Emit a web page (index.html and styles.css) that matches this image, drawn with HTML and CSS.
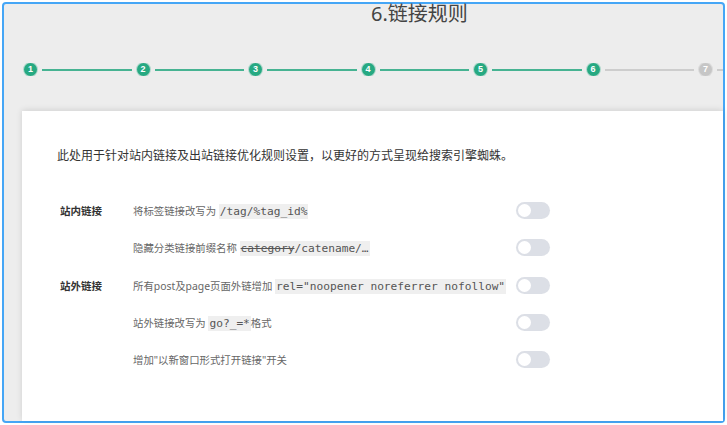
FILE: index.html
```html
<!DOCTYPE html>
<html lang="zh-CN">
<head>
  <meta charset="UTF-8" />
  <meta name="viewport" content="width=device-width, initial-scale=1.0"/>
  <title>链接规则</title>
  <link rel="stylesheet" href="styles.css">
</head>
<body>
  <div class="frame">
    <h1 class="title">6.链接规则</h1>

    <div class="steps">
      <span class="dot">1</span><span class="line"></span>
      <span class="dot">2</span><span class="line"></span>
      <span class="dot">3</span><span class="line"></span>
      <span class="dot">4</span><span class="line"></span>
      <span class="dot">5</span><span class="line"></span>
      <span class="dot">6</span><span class="line todo"></span>
      <span class="dot todo">7</span><span class="line todo"></span>
    </div>

    <div class="card">
      <p class="desc">此处用于针对站内链接及出站链接优化规则设置，以更好的方式呈现给搜索引擎蜘蛛。</p>

      <div class="rules">
        <div class="label">站内链接</div>
        <div class="text">将标签链接改写为 <code>/tag/%tag_id%</code></div>
        <span class="switch"></span>

        <div class="label"></div>
        <div class="text">隐藏分类链接前缀名称 <code><del>category</del>/catename/…</code></div>
        <span class="switch"></span>

        <div class="label">站外链接</div>
        <div class="text">所有post及page页面外链增加 <code>rel="noopener noreferrer nofollow"</code></div>
        <span class="switch"></span>

        <div class="label"></div>
        <div class="text">站外链接改写为 <code>go?_=*</code>格式</div>
        <span class="switch"></span>

        <div class="label"></div>
        <div class="text">增加"以新窗口形式打开链接"开关</div>
        <span class="switch"></span>
      </div>
    </div>
  </div>
</body>
</html>
```

FILE: styles.css
```css
body {
  margin: 0;
  background: #fff;
  font-family: "Noto Sans", "Noto Sans CJK SC", sans-serif;
}

.frame {
  display: flex;
  flex-direction: column;
  margin: 2px;
  height: 417px;
  border: 2px solid #45a6f6;
  border-radius: 4px;
  background: #ededed;
}

.title {
  margin: 0;
  padding-left: 367px;
  font-size: 20px;
  font-weight: normal;
  line-height: 20px;
  color: #444;
}

.steps {
  display: flex;
  align-items: center;
  margin-top: 39px;
  padding-left: 20px;
  overflow: hidden;
}

.dot {
  flex: none;
  width: 13px;
  height: 13px;
  border-radius: 50%;
  background: #26a982;
  box-shadow: 0 0 0 1px rgba(38, 169, 130, 0.3);
  color: #fff;
  font-family: "Liberation Sans", sans-serif;
  font-size: 9px;
  font-weight: bold;
  line-height: 13px;
  text-align: center;
}

.dot.todo {
  background: #c6c6c6;
  box-shadow: 0 0 0 1px rgba(180, 180, 180, 0.3);
}

.line {
  flex: none;
  width: 89.5px;
  height: 2px;
  margin: 0 5px;
  background: #46b392;
}

.line.todo {
  background: #cdcdcd;
}

.steps .line:last-child {
  flex: 1;
  width: auto;
  margin-right: 0;
}

.card {
  flex: 1;
  margin: 35px 0 0 18px;
  padding: 36px 0 0 35px;
  background: #fff;
  box-shadow: 0 -1px 6px rgba(0, 0, 0, 0.12);
}

.desc {
  margin: 0;
  font-size: 12px;
  line-height: 18px;
  color: #333;
}

.rules {
  display: grid;
  grid-template-columns: 73px 383px 34px;
  grid-auto-rows: 37.3px;
  align-items: center;
  margin-top: 27px;
  padding-left: 3px;
}

.label {
  font-size: 10.5px;
  font-weight: bold;
  color: #333;
}

.text {
  font-size: 10.4px;
  color: #666;
  white-space: nowrap;
}

code {
  font-family: "DejaVu Sans Mono", monospace;
  font-size: 11.2px;
  color: #555;
  background: #efefef;
  padding: 1px 1px;
}

.switch {
  position: relative;
  width: 34px;
  height: 17px;
  border-radius: 9px;
  background: #dcdfe6;
}

.switch::after {
  content: "";
  position: absolute;
  top: 2px;
  left: 2px;
  width: 13px;
  height: 13px;
  border-radius: 50%;
  background: #fff;
}
```
